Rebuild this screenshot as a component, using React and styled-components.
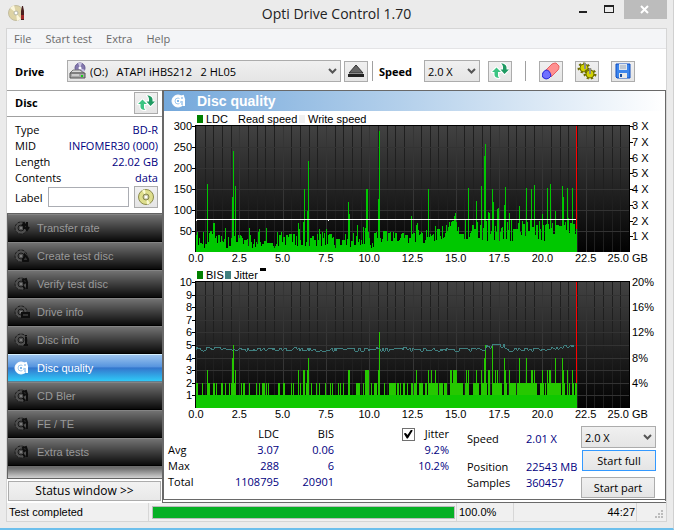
import React, {useState} from 'react'
import styled, {createGlobalStyle} from 'styled-components'

const GlobalStyle = createGlobalStyle`
  * {
    box-sizing: border-box;
  }

  body {
    margin: 0;
    background: #ebebeb;
    font-family: "Open Sans", "Noto Sans", sans-serif;
    font-size: 11px;
    color: #000;
  }

  button, input, select {
    font: inherit;
    color: inherit;
    margin: 0;
    border-radius: 0;
  }
`

const Window = styled.div`
  min-height: 100vh;
  background: #ebebeb;
  border-right: 1px solid #d0d0d0;
  border-bottom: 2px solid #6cbfec;
`

const TitleBar = styled.header`
  display: grid;
  grid-template-columns: 101px 1fr 101px;
  align-items: start;
  height: 28px;
`

const AppIcon = styled.svg`
  width: 18px;
  height: 18px;
  margin: 4px 0 0 8px;
`

const Title = styled.h1`
  margin: 0;
  font-size: 14px;
  line-height: 28px;
  font-weight: normal;
  text-align: center;
  color: #222;
`

const WindowButtons = styled.div`
  display: flex;
  justify-content: flex-end;
  padding-right: 6px;
`

const WindowButton = styled.button`
  display: flex;
  justify-content: center;
  width: ${props => props.$close ? '45px' : '27px'};
  height: 19px;
  padding: ${props => props.$close ? '5px 0 0' : '5px 4px 0 0'};
  border: none;
  background: ${props => props.$close ? '#bcbcbc' : 'none'};
`

const Panel = styled.main`
  margin: 0 6px;
  border: 1px solid #d5d5d5;
  background: #fff;
`

const MenuBar = styled.nav`
  display: flex;
  gap: 14px;
  height: 20px;
  padding-left: 7px;
  background: #f4f5f7;
  border-bottom: 1px solid #e4e4e6;
`

const MenuButton = styled.button`
  padding: 0;
  border: none;
  background: none;
  font-size: 11px;
  line-height: 19px;
  color: #6a6a6a;
`

const Toolbar = styled.div`
  display: flex;
  align-items: center;
  padding: 11px 31px 8px 8px;
`

const ToolLabel = styled.label`
  width: ${props => props.$wide ? '52px' : '45px'};
  font-weight: bold;
`

const Separator = styled.div`
  width: 1px;
  height: 20px;
  margin: ${props => props.$wide ? '0 13px' : '0 6px 0 4px'};
  background: #a0a0a0;
`

const SelectBox = styled.div`
  display: grid;
  flex: ${props => props.$grow ? '1' : 'none'};
  width: ${props => props.$width || 'auto'};
  height: 22px;
  border: 1px solid #acacac;
  background: linear-gradient(#f0f0f0, #e5e5e5);

  > * {
    grid-area: 1 / 1;
  }

  > svg {
    align-self: center;
    pointer-events: none;
  }
`

const Select = styled.select`
  width: 100%;
  padding: 0 18px 0 ${props => props.$icon ? '22px' : '3px'};
  border: none;
  outline: none;
  background: none;
  appearance: none;
  white-space: pre;
`

const Chevron = styled.svg`
  justify-self: end;
  width: 9px;
  height: 6px;
  margin-right: 3px;
`

const IconButton = styled.button`
  display: flex;
  align-items: center;
  justify-content: center;
  width: 24px;
  height: ${props => props.$tall ? '22px' : '21px'};
  margin-left: ${props => props.$gap || '0'};
  padding: 0;
  border: 1px solid #acacac;
  background: linear-gradient(#f0f0f0, #e5e5e5);
`

const Body = styled.div`
  display: grid;
  grid-template-columns: 155px 1fr;
`

const Sidebar = styled.aside`
  display: flex;
  flex-direction: column;
`

const DiscHeader = styled.div`
  display: flex;
  align-items: center;
  justify-content: space-between;
  height: 27px;
  padding: 0 4px 2px 8px;
  border-top: 1px solid #a0a0a0;
  border-bottom: 1px solid #a0a0a0;
`

const DiscTitle = styled.h2`
  margin: 0;
  font-size: 11px;
`

const DiscDetails = styled.dl`
  margin: 0;
  padding: 5px 4px 0 8px;
`

const DetailRow = styled.div`
  display: flex;
  justify-content: space-between;
  line-height: 16px;

  dd {
    margin: 0;
    color: #000080;
  }
`

const LabelRow = styled.div`
  display: flex;
  align-items: center;
  gap: 5px;
  padding: 0 4px 5px 8px;

  label {
    width: 28px;
  }
`

const LabelInput = styled.input`
  flex: 1;
  min-width: 0;
  height: 20px;
  border: 1px solid #abadb3;
  background: #fff;
`

const TestList = styled.div`
  padding-bottom: 12px;
  border: 1px solid #636363;
  border-right: none;
  background: linear-gradient(#6c6c6c, #6c6c6c 254px, #d2d2d2);
`

const TestButton = styled.button`
  display: flex;
  align-items: center;
  gap: 7px;
  width: 100%;
  height: 28px;
  padding: 0 6px;
  border: none;
  border-top: 1px solid ${props => props.$active ? '#d5f0ff' : '#858585'};
  border-bottom: 1px solid ${props => props.$active ? '#5b7f92' : '#000'};
  background: ${props => props.$active
    ? 'linear-gradient(#9cc4ee, #5795df 45%, #3476cd 50%, #2fc9f7)'
    : 'linear-gradient(#727272, #3e3e3e 50%, #0a0a0a)'};
  font-family: "Liberation Sans", Arial, sans-serif;
  color: ${props => props.$active ? '#fff' : '#999'};
`

const StatusButton = styled.button`
  height: 20px;
  margin: 2px 1px 1px;
  padding: 0;
  border: 1px solid #acacac;
  background: linear-gradient(#f2f2f2, #e8e8e8);
  font-size: 12px;
  line-height: 18px;
`

const Content = styled.section`
  border: 1px solid #696969;
  border-left-width: 2px;
  border-bottom: 4px double #696969;
`

const ContentHeader = styled.div`
  display: flex;
  align-items: center;
  gap: 10px;
  height: 20px;
  padding-left: 7px;
  background: linear-gradient(to right, #74a8db, #b7d2ec 50%, #fff);
`

const ContentTitle = styled.h2`
  margin: 0;
  font-family: "Liberation Sans", Arial, sans-serif;
  font-size: 14px;
  line-height: 20px;
  color: #fff;
`

const ChartSvg = styled.svg`
  display: block;
  width: 100%;
  height: auto;
  font-family: "Liberation Sans", Arial, sans-serif;
  font-size: 11px;
`

const Stats = styled.div`
  display: flex;
  height: 76px;
  padding-right: 9px;
`

const StatsTable = styled.table`
  align-self: flex-start;
  width: 285px;
  margin-top: 3px;
  border-collapse: collapse;
  table-layout: fixed;

  th, td {
    height: 16px;
    padding: 0;
    line-height: 16px;
    font-weight: normal;
    text-align: right;
  }

  td {
    color: #000080;
  }

  tbody th {
    padding-left: 4px;
    text-align: left;
  }
`

const StatCol = styled.col`
  width: ${props => props.$width};
`

const JitterLabel = styled.label`
  display: flex;
  align-items: center;
  justify-content: flex-end;
  gap: 10px;
`

const Checkbox = styled.input`
  display: grid;
  place-content: center;
  width: 13px;
  height: 13px;
  border: 1px solid #707070;
  background: #fff;
  appearance: none;

  &:checked::before {
    content: "";
    width: 9px;
    height: 9px;
    background: #000;
    clip-path: polygon(0 45%, 22% 38%, 42% 62%, 82% 0, 100% 12%, 46% 100%, 34% 100%);
  }
`

const Facts = styled.dl`
  display: grid;
  grid-template-columns: 59px 50px;
  grid-template-rows: 28px 16px 16px;
  align-content: start;
  margin: 0 auto 0 18px;
  padding-top: 8px;
  line-height: 16px;
  white-space: nowrap;

  dd {
    margin: 0;
    color: #000080;
  }
`

const Actions = styled.div`
  display: flex;
  flex-direction: column;
  width: 75px;
  padding-top: 3px;
`

const ActionButton = styled.button`
  height: 21px;
  margin: ${props => props.$primary ? '2px 0 6px 1px' : '0 1px 0 0'};
  padding: 0;
  border: 1px solid ${props => props.$primary ? '#3399ff' : '#acacac'};
  background: linear-gradient(#f0f0f0, #e5e5e5);
  font-size: 11px;
`

const StatusBar = styled.footer`
  display: flex;
  height: 18px;
  background: #f0f0f0;
  font-family: "Liberation Sans", Arial, sans-serif;
  line-height: 18px;
`

const StatusCell = styled.div`
  flex: ${props => props.$grow ? '1' : 'none'};
  width: ${props => props.$width || 'auto'};
  padding: ${props => props.$pad || '0 2px'};
  border-right: ${props => props.$last ? 'none' : '1px solid #d7d7d7'};
  text-align: ${props => props.$right ? 'right' : 'left'};
`

const Progress = styled.div`
  height: 13px;
  border: 1px solid #bcbcbc;
  background: #e6e6e6;
`

const ProgressFill = styled.div`
  height: 100%;
  background: #06b025;
`

const tests = [
    {name: 'Transfer rate', badge: 'arrows'},
    {name: 'Create test disc', badge: 'flame'},
    {name: 'Verify test disc', badge: 'search'},
    {name: 'Drive info', badge: 'drive'},
    {name: 'Disc info', badge: 'info'},
    {name: 'Disc quality', badge: 'search'},
    {name: 'CD Bler', badge: 'search'},
    {name: 'FE / TE', badge: 'search'},
    {name: 'Extra tests', badge: 'search'}
]

const discInfo = [
    ['Type', 'BD-R'],
    ['MID', 'INFOMER30 (000)'],
    ['Length', '22.02 GB'],
    ['Contents', 'data']
]

// [sample, LDC value]
const ldcPeaks = [
    [0, 40], [1, 48], [11, 161], [14, 50], [15, 50], [17, 69], [18, 69], [29, 56], [36, 130], [37, 240], [39, 156],
    [53, 56], [63, 55], [70, 58], [102, 70], [103, 55], [107, 72], [108, 151], [111, 97], [112, 216],
    [123, 55], [130, 55], [152, 118], [153, 90], [161, 65], [167, 60], [169, 57], [170, 151], [171, 151], [172, 48],
    [182, 126], [183, 288], [215, 86], [220, 64], [221, 70], [232, 150], [239, 62], [246, 62], [250, 65],
    [258, 85], [259, 93], [260, 72], [269, 76], [272, 152], [280, 121], [285, 157], [288, 228], [289, 257],
    [290, 73], [292, 95], [293, 92], [296, 150], [297, 118], [301, 102], [302, 104], [308, 111], [309, 154],
    [313, 92], [315, 75], [323, 109], [326, 74], [330, 152], [334, 76], [335, 150], [338, 159], [346, 90],
    [351, 152], [354, 162], [359, 98], [366, 157], [367, 131], [371, 152], [372, 80], [376, 152], [380, 54]
]

const SAMPLES = 381

// runs of samples where BIS reaches 2
const bisRuns = [
    [0, 1], [6, 6], [12, 13], [17, 18], [20, 20], [25, 26], [29, 29], [33, 33], [35, 38], [45, 45], [47, 48],
    [53, 53], [60, 60], [63, 63], [66, 68], [70, 70], [72, 72], [82, 83], [87, 88], [95, 95], [97, 97], [104, 104],
    [110, 112], [115, 115], [120, 120], [123, 123], [129, 129], [134, 134], [136, 136], [142, 142], [144, 144],
    [147, 147], [160, 163], [167, 167], [169, 172], [175, 175], [178, 180], [188, 188], [193, 199], [201, 202],
    [204, 204], [207, 208], [211, 211], [215, 216], [218, 219], [223, 226], [229, 230], [232, 241], [243, 246],
    [248, 250], [254, 266], [269, 272], [277, 282], [285, 290], [292, 293], [296, 305], [308, 310], [313, 319],
    [321, 340], [344, 347], [349, 349], [351, 364], [366, 368], [371, 371], [373, 373], [376, 377], [379, 380]
]

const bisPeaks = [
    [11, 3], [36, 4], [37, 5], [39, 3], [102, 3], [107, 3], [108, 3], [111, 3], [112, 4], [152, 3], [153, 3],
    [169, 3], [170, 3], [171, 3], [172, 3], [182, 3], [183, 6], [220, 3], [232, 3], [235, 3], [239, 3], [254, 3],
    [255, 3], [257, 3], [258, 3], [259, 3], [260, 3], [270, 3], [272, 3], [280, 3], [285, 3], [288, 4], [289, 5],
    [292, 3], [293, 3], [296, 5], [299, 3], [301, 3], [308, 4], [309, 3], [313, 3], [323, 4], [330, 4], [335, 3],
    [336, 3], [338, 3], [346, 3], [351, 3], [353, 3], [354, 3], [359, 4], [366, 4], [367, 3], [371, 3], [376, 3]
]

// small repeatable generator, so the noise is the same on every render
const makeNoise = seed => () => {
    seed = (seed * 1103515245 + 12345) % 2147483648
    return seed / 2147483648
}

const buildLdc = () => {
    const noise = makeNoise(41)
    const values = []
    for (let i = 0; i < SAMPLES; i++) {
        const floor = i < 185 ? 8 : i < 250 ? 22 : 26
        const range = i < 185 ? 40 : i < 250 ? 34 : 48
        values.push(floor + range * noise())
        if (noise() > 0.75 && i > 0) values[i] = values[i - 1]
    }
    ldcPeaks.forEach(([i, v]) => { values[i] = v })
    return values
}

const buildBis = () => {
    const values = new Array(SAMPLES).fill(1)
    bisRuns.forEach(([from, to]) => values.fill(2, from, to + 1))
    bisPeaks.forEach(([i, v]) => { values[i] = v })
    return values
}

const buildJitter = () => {
    const noise = makeNoise(7)
    let offset = 0
    return Array.from({length: 379}, (_, i) => {
        let base = 4.66
        if (i > 8 && i < 30) base = 4.75
        if (i > 290 && i < 309) base = 4.93
        if (i > 351) base = 4.72 + (i - 351) * 0.008
        if (noise() > 0.4) offset = (noise() - 0.5) * 0.3
        return base + offset
    })
}

const ldc = buildLdc()
const bis = buildBis()
const jitter = buildJitter()

const LEFT = 32
const WIDTH = 433
const HEIGHT = 126

const barPath = (values, bottom, unit) => values
    .map((v, i) => `M${LEFT + i} ${bottom}v${-Math.round(v * unit)}h1V${bottom}z`)
    .join('')

const Plot = ({top, rows, id}) => (
    <>
        <defs>
            <linearGradient id={id} x1="0" y1="0" x2="0" y2="1">
                <stop offset="0" stopColor="#424242"/>
                <stop offset="1" stopColor="#020202"/>
            </linearGradient>
        </defs>
        <rect x={LEFT} y={top} width={WIDTH} height={HEIGHT} fill={`url(#${id})`}/>
        {Array.from({length: 51}, (_, i) => (
            <rect key={i} x={LEFT + Math.round(i * WIDTH / 50)} y={top} width="1" height={HEIGHT}
                  fill={i % 5 === 0 ? '#353535' : '#1f1f1f'}/>
        ))}
        {Array.from({length: rows - 1}, (_, i) => (
            <rect key={i} x={LEFT} y={top + Math.round((i + 1) * HEIGHT / rows)} width={WIDTH} height="1"
                  fill="#333"/>
        ))}
        <path d={`M${LEFT - 1} ${top - 1}h${WIDTH + 2}v${HEIGHT + 1}h-1V${top}H${LEFT}v${HEIGHT}h-1z`} fill="#000"/>
    </>
)

const XAxis = ({y}) => (
    <g>
        {[0, 2.5, 5, 7.5, 10, 12.5, 15, 17.5, 20, 22.5].map(v => (
            <text key={v} x={LEFT + v * WIDTH / 25} y={y} textAnchor="middle">{v.toFixed(1)}</text>
        ))}
        <text x={LEFT + WIDTH} y={y} textAnchor="end">25.0</text>
        <text x={LEFT + WIDTH + 3} y={y}>GB</text>
    </g>
)

const YAxis = ({top, values}) => values.map((v, i) => {
    const y = top + Math.round(i * HEIGHT / values.length)
    return (
        <g key={v}>
            <text x="28" y={y + 4} textAnchor="end">{v}</text>
            <rect x="28" y={y} width="4" height="1"/>
        </g>
    )
})

const LdcChart = () => (
    <ChartSvg viewBox="0 0 501 154" shapeRendering="crispEdges" role="img" aria-label="LDC">
        <rect x="33" y="4" width="6" height="8" fill="#008000"/>
        <text x="42" y="12">LDC</text>
        <text x="74" y="12">Read speed</text>
        <rect x="135" y="4" width="6" height="8" fill="#f0f0f0"/>
        <text x="144" y="12">Write speed</text>
        <Plot top={15} rows={6} id="ldcFill"/>
        <path d={barPath(ldc, 141, 0.42)} fill="#00c800"/>
        <rect x="32" y="108" width="380" height="1" fill="#fff"/>
        <rect x="32" y="109" width="1" height="1" fill="#fff"/>
        <rect x="164" y="109" width="1" height="1" fill="#fff"/>
        <rect x="412" y="15" width="1" height="103" fill="#f00"/>
        <YAxis top={15} values={[300, 250, 200, 150, 100, 50]}/>
        {[8, 7, 6, 5, 4, 3, 2, 1].map((v, i) => (
            <g key={v}>
                <text x="468" y={19 + Math.round(i * HEIGHT / 8)}>{v} X</text>
                <rect x="465" y={15 + Math.round(i * HEIGHT / 8)} width="4" height="1"/>
            </g>
        ))}
        <XAxis y={151}/>
    </ChartSvg>
)

const BisChart = () => (
    <ChartSvg viewBox="0 0 501 158" shapeRendering="crispEdges" role="img" aria-label="BIS">
        <rect x="33" y="6" width="6" height="8" fill="#008000"/>
        <text x="42" y="14">BIS</text>
        <rect x="61" y="6" width="6" height="8" fill="#408080"/>
        <text x="70" y="14">Jitter</text>
        <rect x="96" y="3" width="6" height="3"/>
        <Plot top={17} rows={10} id="bisFill"/>
        <path d={barPath(bis, 143, 12.6)} fill="#26c800"/>
        <rect x="32" y="130" width="381" height="13" fill="#0fc800"/>
        <polyline points={jitter.map((v, i) => `${LEFT + i},${143 - Math.round(v * 12.6)}`).join(' ')}
                  fill="none" stroke="#408080"/>
        <rect x="412" y="17" width="1" height="101" fill="#f00"/>
        <YAxis top={17} values={[10, 9, 8, 7, 6, 5, 4, 3, 2, 1]}/>
        {[20, 16, 12, 8, 4].map((v, i) => (
            <text key={v} x="468" y={21 + Math.round(i * HEIGHT / 5)}>{v}%</text>
        ))}
        <XAxis y={153}/>
    </ChartSvg>
)

const badges = {
    arrows: <path d="M10 4v5M8 6l2-3 2 3M13 2v6M11 7l2 3 2-3" fill="none"/>,
    flame: <path d="M9 13c-1-3 2-3 2-6 2 2 4 4 3 6z"/>,
    search: <path d="M9 4l3-1 1 3-3 1zM13 7v6M9 10l2 3" fill="none"/>,
    drive: <path d="M8 9h7v4H8z"/>,
    info: <path d="M12 3v1M11 6h1v7M10 13h4" fill="none"/>
}

const TestIcon = ({badge, active}) => (
    <svg width="16" height="16" viewBox="0 0 16 16" aria-hidden="true">
        <circle cx="7" cy="8" r="6" fill={active ? '#fff' : '#505050'} stroke={active ? '#fff' : '#1c1c1c'}
                strokeDasharray={active ? 'none' : '3 1'}/>
        <circle cx="7" cy="8" r="3" fill="none" stroke={active ? '#9cc8f0' : '#1a1a1a'}/>
        <circle cx="7" cy="8" r="1" fill={active ? '#5ba0e2' : '#888'}/>
        <g stroke={active ? '#fff' : '#0e0e0e'} fill={active ? '#fff' : '#333'} strokeWidth="2">{badges[badge]}</g>
        {active && <path d="M10 5h2M11 8v4" stroke="#6aa8e4"/>}
    </svg>
)

const ArrowDown = () => (
    <Chevron viewBox="0 0 9 6" aria-hidden="true">
        <path d="M1 1l3.500 3.500L8 1" fill="none" stroke="#555" strokeWidth="2"/>
    </Chevron>
)

const RefreshIcon = () => (
    <svg width="18" height="18" viewBox="0 0 18 18" aria-hidden="true">
        <g stroke="#fff" strokeWidth="2" strokeLinejoin="round" fill="#fff">
            <path d="M5.500 5.500L1 10h2.500v3c0 2 2 3 5 3-1.500-1-1.500-2-1.500-3v-3h3z"/>
            <path d="M13.500 12L18 7.500h-2.500v-2c0-2-2-4-5.500-4 1.500 1 2 2 2 4v2H9.500z"/>
        </g>
        <path d="M5.500 5.500L1 10h2.500v3c0 2 2 3 5 3-1.500-1-1.500-2-1.500-3v-3h3z" fill="#3cc482"/>
        <path d="M13.500 12L18 7.500h-2.500v-2c0-2-2-4-5.500-4 1.500 1 2 2 2 4v2H9.500z" fill="#1f9a62"/>
    </svg>
)

const DriveIcon = () => (
    <svg width="20" height="18" viewBox="0 0 20 18" aria-hidden="true">
        <circle cx="12" cy="6" r="5" fill="#8378ad" stroke="#665b92"/>
        <path d="M12 6l-2-5h4zM12 6l5 2-2 3z" fill="#c9c3e2"/>
        <circle cx="12" cy="6" r="1.500" fill="#fff"/>
        <path d="M5 8h7l4 3H2z" fill="#d9d9d9" stroke="#777"/>
        <path d="M2 11h15v5H2z" fill="#a8a8a8" stroke="#555"/>
        <path d="M4 13h7" stroke="#eee"/>
        <path d="M13 13h2v2h-2z" fill="#18d018"/>
    </svg>
)

const EjectIcon = () => (
    <svg width="16" height="14" viewBox="0 0 16 14" aria-hidden="true">
        <path d="M8 1l7 8H1z" fill="#666" stroke="#333"/>
        <path d="M0 10h16v3H0z" fill="#222"/>
    </svg>
)

const EraserIcon = () => (
    <svg width="18" height="18" viewBox="0 0 18 18" aria-hidden="true">
        <path d="M4 8l6-6q2-1 4-1l3 3q0 3-1 4l-7 7z" fill="#ff9090" stroke="#e86060"/>
        <path d="M4 8q4 0 5 6-2 3-5 3-4-1-4-4 1-4 4-5z" fill="#7070ff" stroke="#2424d8"/>
    </svg>
)

const GearsIcon = () => (
    <svg width="20" height="18" viewBox="0 0 20 18" aria-hidden="true">
        <ellipse cx="7" cy="6" rx="5" ry="4" fill="none" stroke="#6e6e00" strokeWidth="3" strokeDasharray="2 2"/>
        <ellipse cx="7" cy="6" rx="4" ry="4" fill="#d2d200" stroke="#6e6e00"/>
        <ellipse cx="13" cy="12" rx="5" ry="4" fill="none" stroke="#6e6e00" strokeWidth="3" strokeDasharray="2 2"/>
        <ellipse cx="13" cy="12" rx="4" ry="4" fill="#d2d200" stroke="#6e6e00"/>
        <path d="M8 1v6M13 6v6" stroke="#8c8c8c" strokeWidth="2"/>
    </svg>
)

const SaveIcon = () => (
    <svg width="16" height="16" viewBox="0 0 16 16" aria-hidden="true">
        <path d="M1 1h14v14H2l-1-1z" fill="#3c85ec" stroke="#104fc0"/>
        <path d="M4 1h8v6H4z" fill="#dfe6ee"/>
        <path d="M5 3h6M5 5h6" stroke="#a0a8b4"/>
        <path d="M4 10h8v5H4z" fill="#e8e8e8"/>
        <path d="M5 11h2v3H5z" fill="#174b9c"/>
    </svg>
)

const DiscIcon = () => (
    <svg width="18" height="18" viewBox="0 0 18 18" aria-hidden="true">
        <circle cx="9" cy="9" r="7.500" fill="#dede8c" stroke="#8c8c4c"/>
        <path d="M9 9L5 2.500l3-1zM9 9l4 6.500-3 1z" fill="#fafad0"/>
        <circle cx="9" cy="9" r="3" fill="#c4c4a0" stroke="#85854e"/>
        <circle cx="9" cy="9" r="1.500" fill="#fff"/>
    </svg>
)

const speeds = ['2.0 X', '4.0 X', '6.0 X']

const App = () => {
    const [active, setActive] = useState('Disc quality')
    const [label, setLabel] = useState('')
    const [showJitter, setShowJitter] = useState(true)
    const progress = 100

    return (
        <Window>
            <GlobalStyle/>
            <TitleBar>
                <AppIcon viewBox="0 0 18 18" aria-hidden="true">
                    <circle cx="8" cy="9" r="7.500" fill="#ddd3a5" stroke="#c3bda0"/>
                    <path d="M8 9L2 4l4-3zM8 9l5 6-4 2z" fill="#fbf6dc"/>
                    <circle cx="8" cy="9" r="2" fill="#fff" stroke="#b5b5a5"/>
                    <path d="M14 2h1l1 5v9h-3V7z" fill="#4a2020"/>
                    <path d="M13 11h3v4h-3z" fill="#a02828"/>
                </AppIcon>
                <Title>Opti Drive Control 1.70</Title>
                <WindowButtons>
                    <WindowButton aria-label="Minimize">
                        <svg width="12" height="10" viewBox="0 0 12 10"><path d="M2 6h8v2H2z" fill="#222"/></svg>
                    </WindowButton>
                    <WindowButton aria-label="Maximize">
                        <svg width="12" height="10" viewBox="0 0 12 10">
                            <path d="M1 0h10v8H1zM2 2v5h8V2z" fillRule="evenodd" fill="#222"/>
                        </svg>
                    </WindowButton>
                    <WindowButton $close aria-label="Close">
                        <svg width="10" height="10" viewBox="0 0 10 10">
                            <path d="M1 1l7 7M8 1L1 8" stroke="#fff" strokeWidth="2"/>
                        </svg>
                    </WindowButton>
                </WindowButtons>
            </TitleBar>

            <Panel>
                <MenuBar>
                    {['File', 'Start test', 'Extra', 'Help'].map(item => <MenuButton key={item}>{item}</MenuButton>)}
                </MenuBar>

                <Toolbar>
                    <ToolLabel $wide htmlFor="drive">Drive</ToolLabel>
                    <SelectBox $grow>
                        <DriveIcon/>
                        <Select $icon id="drive">
                            <option>{'(O:)\u00a0\u00a0 ATAPI iHBS212\u00a0\u00a0 2 HL05'}</option>
                        </Select>
                        <ArrowDown/>
                    </SelectBox>
                    <IconButton $gap="3px" aria-label="Eject"><EjectIcon/></IconButton>
                    <Separator/>
                    <ToolLabel htmlFor="speed">Speed</ToolLabel>
                    <SelectBox $width="56px">
                        <Select id="speed">{speeds.map(s => <option key={s}>{s}</option>)}</Select>
                        <ArrowDown/>
                    </SelectBox>
                    <IconButton $gap="8px" aria-label="Refresh speeds"><RefreshIcon/></IconButton>
                    <Separator $wide/>
                    <IconButton aria-label="Erase"><EraserIcon/></IconButton>
                    <IconButton $gap="12px" aria-label="Options"><GearsIcon/></IconButton>
                    <IconButton $gap="12px" aria-label="Save"><SaveIcon/></IconButton>
                </Toolbar>

                <Body>
                    <Sidebar>
                        <DiscHeader>
                            <DiscTitle>Disc</DiscTitle>
                            <IconButton $tall aria-label="Refresh disc"><RefreshIcon/></IconButton>
                        </DiscHeader>
                        <DiscDetails>
                            {discInfo.map(([name, value]) => (
                                <DetailRow key={name}>
                                    <dt>{name}</dt>
                                    <dd>{value}</dd>
                                </DetailRow>
                            ))}
                        </DiscDetails>
                        <LabelRow>
                            <label htmlFor="label">Label</label>
                            <LabelInput id="label" value={label} onChange={e => setLabel(e.target.value)}/>
                            <IconButton $tall aria-label="Read label"><DiscIcon/></IconButton>
                        </LabelRow>
                        <TestList>
                            {tests.map(({name, badge}) => (
                                <TestButton key={name} $active={name === active} onClick={() => setActive(name)}>
                                    <TestIcon badge={badge} active={name === active}/>
                                    {name}
                                </TestButton>
                            ))}
                        </TestList>
                        <StatusButton>Status window &gt;&gt;</StatusButton>
                    </Sidebar>

                    <Content>
                        <ContentHeader>
                            <TestIcon badge="search" active/>
                            <ContentTitle>Disc quality</ContentTitle>
                        </ContentHeader>
                        <LdcChart/>
                        <BisChart/>
                        <Stats>
                            <StatsTable>
                                <colgroup>
                                    <StatCol $width="45px"/>
                                    <StatCol $width="70px"/>
                                    <StatCol $width="55px"/>
                                    <StatCol $width="115px"/>
                                </colgroup>
                                <thead>
                                    <tr>
                                        <td/>
                                        <th>LDC</th>
                                        <th>BIS</th>
                                        <th>
                                            <JitterLabel>
                                                <Checkbox type="checkbox" checked={showJitter}
                                                          onChange={e => setShowJitter(e.target.checked)}/>
                                                Jitter
                                            </JitterLabel>
                                        </th>
                                    </tr>
                                </thead>
                                <tbody>
                                    <tr>
                                        <th>Avg</th>
                                        <td>3.07</td>
                                        <td>0.06</td>
                                        <td>9.2%</td>
                                    </tr>
                                    <tr>
                                        <th>Max</th>
                                        <td>288</td>
                                        <td>6</td>
                                        <td>10.2%</td>
                                    </tr>
                                    <tr>
                                        <th>Total</th>
                                        <td>1108795</td>
                                        <td>20901</td>
                                        <td/>
                                    </tr>
                                </tbody>
                            </StatsTable>
                            <Facts>
                                <dt>Speed</dt>
                                <dd>2.01 X</dd>
                                <dt>Position</dt>
                                <dd>22543 MB</dd>
                                <dt>Samples</dt>
                                <dd>360457</dd>
                            </Facts>
                            <Actions>
                                <SelectBox>
                                    <Select aria-label="Test speed">{speeds.map(s => <option key={s}>{s}</option>)}</Select>
                                    <ArrowDown/>
                                </SelectBox>
                                <ActionButton $primary>Start full</ActionButton>
                                <ActionButton>Start part</ActionButton>
                            </Actions>
                        </Stats>
                    </Content>
                </Body>

                <StatusBar>
                    <StatusCell $width="142px">Test completed</StatusCell>
                    <StatusCell $grow $pad="3px 1px 0 3px">
                        <Progress role="progressbar" aria-label="Test progress" aria-valuenow={progress}>
                            <ProgressFill style={{width: `${progress}%`}}/>
                        </Progress>
                    </StatusCell>
                    <StatusCell $width="57px">100.0%</StatusCell>
                    <StatusCell $width="123px" $right $pad="0 1px">44:27</StatusCell>
                    <StatusCell $last $width="29px" $pad="7px 0 0 18px">
                        <svg width="10" height="10" viewBox="0 0 10 10" display="block" aria-hidden="true">
                            <path d="M6 0h2v2H6zM3 3h2v2H3zM6 3h2v2H6zM0 6h2v2H0zM3 6h2v2H3zM6 6h2v2H6z" fill="#bcbcbc"/>
                        </svg>
                    </StatusCell>
                </StatusBar>
            </Panel>
        </Window>
    )
}

export default App
